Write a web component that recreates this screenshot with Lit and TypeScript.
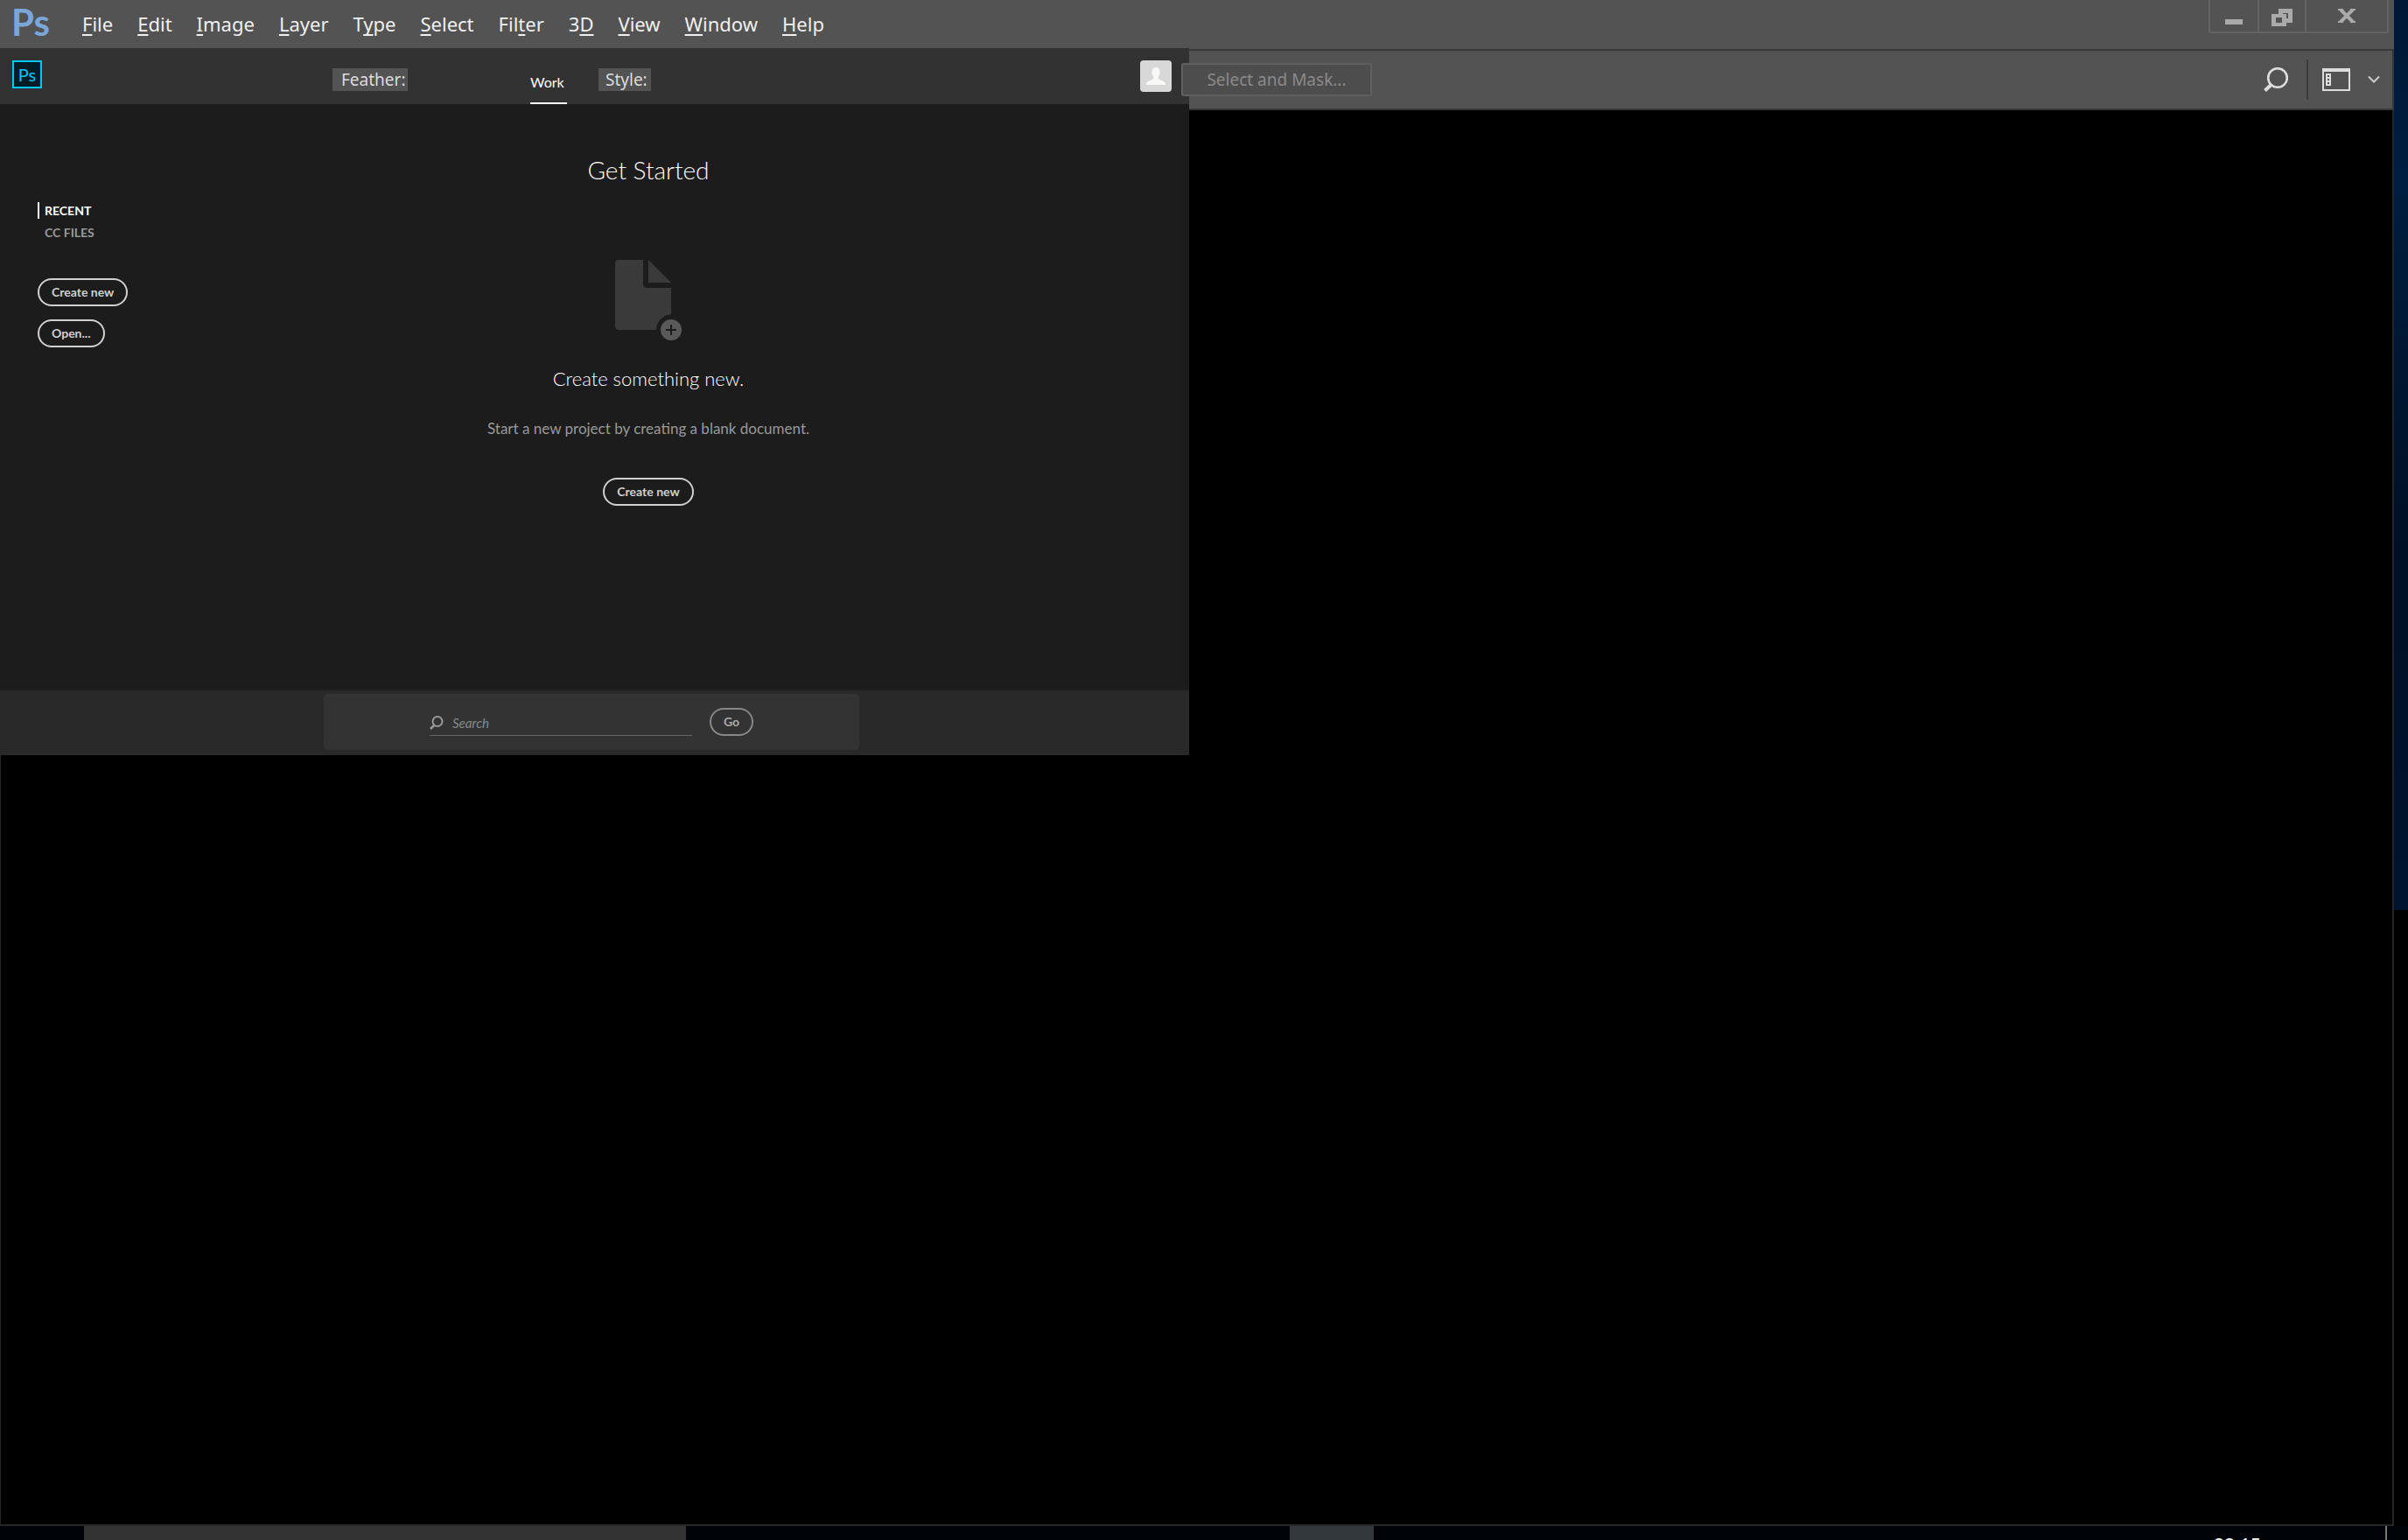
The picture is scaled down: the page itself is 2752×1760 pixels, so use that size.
import { LitElement, html, css } from "lit";
import { customElement } from "lit/decorators.js";

const MENUS: [string, string, string][] = [
  ["", "F", "ile"],
  ["", "E", "dit"],
  ["", "I", "mage"],
  ["", "L", "ayer"],
  ["T", "y", "pe"],
  ["", "S", "elect"],
  ["Fil", "t", "er"],
  ["3", "D", ""],
  ["", "V", "iew"],
  ["", "W", "indow"],
  ["", "H", "elp"],
];

@customElement("menu-bar")
export class MenuBar extends LitElement {
  static styles = css`
    :host {
      display: flex;
      height: 55px;
      padding: 0 6px 0 13px;
      background: #535353;
      font-family: "Noto Sans", sans-serif;
    }
    .logo {
      width: 67px;
      color: #7aa6da;
      font: bold 42px/50px Lato, sans-serif;
    }
    .menus {
      display: flex;
      flex: 1;
      gap: 28px;
      padding-left: 14px;
    }
    button {
      font: inherit;
      border: 0;
      padding: 0;
      background: none;
      color: inherit;
    }
    .menu {
      height: 53px;
      font-size: 22px;
      color: #f0f0f0;
    }
    .key {
      text-decoration: underline;
      text-decoration-thickness: 2px;
      text-underline-offset: 3px;
      text-decoration-skip-ink: none;
    }
    .controls {
      display: flex;
      height: 38px;
      box-sizing: border-box;
      border: 2px solid #646464;
      border-top: 0;
      border-radius: 0 0 3px 3px;
    }
    .control {
      width: 54px;
      border-right: 2px solid #646464;
    }
    .minimize {
      width: 56px;
    }
    .close {
      width: 92px;
      border-right: 0;
    }
    svg {
      display: block;
      margin: 0 auto;
    }
  `;
  render() {
    return html`
      <div class="logo">Ps</div>
      <nav class="menus">
        ${MENUS.map(
          ([a, k, b]) =>
            html`<button class="menu">${a}<span class="key">${k}</span>${b}</button>`,
        )}
      </nav>
      <div class="controls">
        <button class="control minimize" aria-label="Minimize">
          <svg width="24" height="36" viewBox="0 0 24 36"><path d="M2 22h20v6H2z" fill="#aaa" /></svg>
        </button>
        <button class="control" aria-label="Restore">
          <svg width="24" height="36" viewBox="0 0 24 36">
            <path d="M8 10h16v16h-7v4H0V16h8zM13 15v1h4v5h2v-6zM5 20v6h7v-6z" fill="#aaa" fill-rule="evenodd" />
          </svg>
        </button>
        <button class="control close" aria-label="Close">
          <svg width="20" height="36" viewBox="0 0 20 36">
            <path d="M3 11L17 25M17 11L3 25" stroke="#aaa" stroke-width="4" />
            <path d="M0 10h6v2H0zM14 10h6v2h-6zM0 24h6v2H0zM14 24h6v2h-6z" fill="#aaa" />
          </svg>
        </button>
      </div>
    `;
  }
}

@customElement("options-bar")
export class OptionsBar extends LitElement {
  static styles = css`
    :host {
      display: flex;
      align-items: center;
      height: 70px;
      box-sizing: border-box;
      background: #535353;
      border: solid #383838;
      border-width: 2px 2px 2px 0;
      font-family: "Noto Sans", sans-serif;
    }
    button {
      padding: 0;
      border: 0;
      background: none;
    }
    .mask {
      position: relative;
      width: 218px;
      height: 38px;
      margin-left: -9px;
      box-sizing: border-box;
      border: 2px solid #606060;
      border-radius: 3px;
      background: #4d4d4d;
      color: #8a8a8a;
      font: 19px/32px "Noto Sans", sans-serif;
    }
    .space {
      flex: 1;
    }
    .rule {
      width: 2px;
      height: 46px;
      margin: 0 16px 0 21px;
      background: #3c3c3c;
    }
    .chevron {
      margin: 0 14px 0 20px;
    }
    svg {
      display: block;
    }
  `;
  render() {
    return html`
      <button class="mask" disabled>Select and Mask...</button>
      <span class="space"></span>
      <button aria-label="Search">
        <svg width="28" height="28" viewBox="0 0 28 28" fill="none" stroke="#ddd">
          <circle cx="16" cy="12" r="10.800" stroke-width="2.600" />
          <path d="M8.500 20L1.500 26.500" stroke-width="4" />
        </svg>
      </button>
      <span class="rule"></span>
      <button aria-label="Workspace">
        <svg width="32" height="28" viewBox="0 0 32 28">
          <path
            d="M0 1h32v26H0zM2 5v20h28V5zM4 7h6v14H4zM6 9v2h2V9zM6 13v2h2v-2zM6 17v2h2v-2z"
            fill="#ddd"
            fill-rule="evenodd"
          />
        </svg>
      </button>
      <button class="chevron" aria-label="Workspace options">
        <svg width="14" height="10" viewBox="0 0 14 10">
          <path d="M1 1.500l6 6 6-6" fill="none" stroke="#ccc" stroke-width="2" />
        </svg>
      </button>
    `;
  }
}

@customElement("start-panel")
export class StartPanel extends LitElement {
  static styles = css`
    :host {
      display: flex;
      flex-direction: column;
      background: #1c1c1c;
      color: #fff;
      font-family: Lato, "Noto Sans", sans-serif;
    }
    .top {
      display: flex;
      height: 64px;
      padding: 0 20px 0 14px;
      background: #323232;
    }
    .badge {
      width: 30px;
      height: 28px;
      margin: 14px 332px 0 0;
      border: 2px solid #00c8ff;
      background: #001d26;
      color: #00c8ff;
      font: 20px/28px Lato, sans-serif;
      text-align: center;
    }
    .label {
      height: 26px;
      margin-top: 23px;
      padding: 0 2px 0 10px;
      background: #535353;
      color: #dcdcdc;
      font: 19px/26px "Noto Sans", sans-serif;
    }
    .feather {
      width: 74px;
    }
    .style {
      width: 50px;
      padding-left: 8px;
    }
    .work {
      box-sizing: border-box;
      width: 42px;
      height: 64px;
      margin: 0 36px 0 140px;
      padding: 27px 0 0;
      border-bottom: 2px solid #fff;
      color: #fff;
      font: 16px/24px Lato, sans-serif;
      text-decoration: none;
    }
    .avatar {
      width: 36px;
      height: 36px;
      margin: 14px 0 0 auto;
      padding: 0;
      border: 0;
      border-radius: 4px;
      background: #d8d8d8;
    }
    svg {
      display: block;
    }
    .body {
      display: flex;
      height: 670px;
    }
    .side {
      display: flex;
      flex-direction: column;
      align-items: flex-start;
      width: 127px;
      padding: 109px 0 0 43px;
    }
    .tab {
      height: 25px;
      padding-left: 8px;
      color: #999;
      font: bold 14px/26px Lato, sans-serif;
      text-decoration: none;
    }
    .tab.on {
      height: 19px;
      margin: 3px 0;
      padding-left: 6px;
      border-left: 2px solid #fff;
      color: #fff;
      line-height: 20px;
    }
    .pill {
      height: 32px;
      padding: 0 14px;
      box-sizing: border-box;
      border: 2px solid #d0d0d0;
      border-radius: 16px;
      background: none;
      color: #d0d0d0;
      font: bold 14px/26px Lato, sans-serif;
    }
    .side .pill {
      margin-bottom: 15px;
    }
    .side .first {
      margin-top: 40px;
    }
    .main {
      display: flex;
      flex: 1;
      flex-direction: column;
      align-items: center;
      padding-right: 47px;
    }
    h1,
    h2,
    p {
      margin: 0;
      font-weight: 300;
    }
    h1 {
      margin-top: 55px;
      font-size: 28px;
      line-height: 40px;
    }
    .doc {
      margin: 83px 0 28px 0;
    }
    h2 {
      font-size: 22px;
      line-height: 32px;
    }
    p {
      margin: 28px 0 43px;
      color: #999;
      font-size: 17px;
      font-weight: 400;
      line-height: 26px;
    }
    .foot {
      padding: 4px 0 6px;
      background: #292929;
    }
    .search {
      display: flex;
      justify-content: center;
      align-items: center;
      width: 612px;
      height: 64px;
      box-sizing: border-box;
      margin-left: 370px;
      border-radius: 5px;
      background: #333;
    }
    .field {
      display: flex;
      align-items: center;
      gap: 10px;
      width: 300px;
      height: 32px;
      box-sizing: border-box;
      border-bottom: 1px solid #666;
      margin-right: 20px;
      padding-top: 2px;
    }
    input {
      flex: 1;
      min-width: 0;
      padding: 0;
      border: 0;
      outline: 0;
      background: none;
      color: #ccc;
      font: italic 15px/20px Lato, sans-serif;
    }
    input::placeholder {
      color: #888;
      opacity: 1;
    }
    .go {
      border-color: #888;
      color: #aaa;
    }
  `;
  render() {
    return html`
      <header class="top">
        <div class="badge">Ps</div>
        <span class="label feather">Feather:</span>
        <a class="work" href="#work">Work</a>
        <span class="label style">Style:</span>
        <button class="avatar" aria-label="Account">
          <svg width="36" height="36" viewBox="0 0 36 36" fill="#f8f8f6">
            <path
              d="M18 8c3 0 5 2 4.500 6-.300 3-1.500 4-1.800 6 0 3 8.300 3 8.300 7v1H7v-1c0-4 8.300-4 8.300-7-.300-2-1.500-3-1.800-6C13 10 15 8 18 8z"
            />
          </svg>
        </button>
      </header>
      <div class="body">
        <nav class="side">
          <a class="tab on" href="#recent">RECENT</a>
          <a class="tab" href="#files">CC FILES</a>
          <button class="pill first">Create new</button>
          <button class="pill">Open...</button>
        </nav>
        <main class="main">
          <h1>Get Started</h1>
          <svg class="doc" width="76" height="92" viewBox="0 0 76 92">
            <path
              d="M4 0h28v28a4 4 0 0 0 4 4h28v30.500A17.500 17.500 0 0 0 47 80H4a4 4 0 0 1-4-4V4a4 4 0 0 1 4-4zM38 0l26 26H38z"
              fill="#3a3a3a"
            />
            <circle cx="64" cy="80" r="12" fill="#595959" />
            <path d="M58 80h12M64 74v12" stroke="#1c1c1c" stroke-width="2" />
          </svg>
          <h2>Create something new.</h2>
          <p>Start a new project by creating a blank document.</p>
          <button class="pill">Create new</button>
        </main>
      </div>
      <footer class="foot">
        <form class="search">
          <label class="field">
            <svg width="16" height="16" viewBox="0 0 16 16" fill="none" stroke="#999">
              <circle cx="9" cy="6.500" r="5.500" stroke-width="2" />
              <path d="M5 11L1 15" stroke-width="2.600" />
            </svg>
            <input type="search" placeholder="Search" aria-label="Search" />
          </label>
          <button class="pill go" type="button">Go</button>
        </form>
      </footer>
    `;
  }
}

@customElement("app-root")
export class AppRoot extends LitElement {
  static styles = css`
    :host {
      display: flex;
      flex-direction: column;
      min-height: 100vh;
      background: #000;
      overflow: hidden;
    }
    .desk {
      display: flex;
      flex: 1;
    }
    .window {
      display: flex;
      flex: 1;
      flex-direction: column;
    }
    .work {
      display: grid;
      grid-template-columns: 1359fr 1377fr;
    }
    .right {
      display: flex;
      flex-direction: column;
      border-top: 1px solid #535353;
    }
    .canvas {
      flex: 1;
      border-right: 2px solid #262626;
    }
    .rest {
      flex: 1;
      border: solid #262626;
      border-width: 0 2px 2px 1px;
    }
    .wall {
      width: 16px;
      background: linear-gradient(#001736, #001e40 20%, #001024 60%, #001430) top / 100% 1040px
        no-repeat #000;
    }
    .taskbar {
      display: flex;
      height: 16px;
      box-sizing: border-box;
      padding-left: 96px;
      background: #000308;
      overflow: hidden;
    }
    .task {
      width: 688px;
      background: #333;
    }
    .app {
      width: 96px;
      margin-left: 690px;
      background: #33383c;
    }
    .clock {
      margin: 10px 142px 0 auto;
      color: #fff;
      font: 21px/24px "Noto Sans", sans-serif;
    }
    .peek {
      width: 24px;
      border-left: 2px solid #777;
    }
  `;
  render() {
    return html`
      <div class="desk">
        <div class="window">
          <menu-bar></menu-bar>
          <div class="work">
            <start-panel></start-panel>
            <div class="right">
              <options-bar></options-bar>
              <div class="canvas"></div>
            </div>
          </div>
          <div class="rest"></div>
        </div>
        <div class="wall"></div>
      </div>
      <div class="taskbar">
        <div class="task"></div>
        <div class="app"></div>
        <time class="clock">22:15</time>
        <div class="peek"></div>
      </div>
    `;
  }
}
